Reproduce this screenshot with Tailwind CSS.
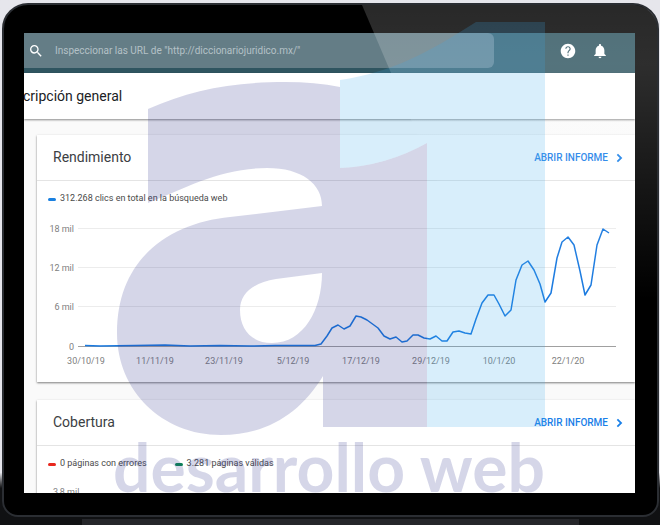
<!DOCTYPE html>
<html lang="es">
<head>
  <meta charset="UTF-8">
  <meta name="viewport" content="width=device-width, initial-scale=1.0">
  <title>Descripción general</title>
  <script src="https://cdn.jsdelivr.net/npm/@tailwindcss/browser@4"></script>
</head>
<body class="bg-[#e4e4ea] h-screen overflow-hidden font-['Roboto',sans-serif]">
  <div class="relative h-full flex flex-col pt-[3px] pl-0.5 pr-px bg-linear-to-b from-[#e6e6ec] from-90% to-[#101113] to-93%">

    <!-- Portátil -->
    <div class="flex-1 min-h-0 flex bg-black rounded-t-[26px] rounded-b-[16px] border-2 border-[#2b2e33] pt-7 pb-[22px] pl-5 pr-[22px]">

      <!-- Pantalla -->
      <div class="flex-1 min-w-0 flex flex-col overflow-hidden bg-[#fafafa]">
        <!-- Barra superior -->
        <header class="h-10 shrink-0 flex items-start bg-[#2f5560]">
          <label class="w-[470px] h-[35px] flex items-center rounded-r-md bg-[#647d86] pl-1">
            <svg class="w-4 h-4 shrink-0" viewBox="0 0 24 24" fill="#fff" aria-hidden="true">
              <path d="M15.5 14h-.79l-.28-.27A6.47 6.47 0 0 0 16 9.5 6.5 6.5 0 1 0 9.5 16c1.61 0 3.09-.59 4.23-1.57l.27.28v.79l5 4.99L20.49 19l-4.99-5zm-6 0C7.01 14 5 11.99 5 9.5S7.01 5 9.5 5 14 7.01 14 9.5 11.99 14 9.5 14z"/>
            </svg>
            <input type="text" aria-label="Inspeccionar URL" placeholder='Inspeccionar las URL de "http://diccionariojuridico.mx/"' class="flex-1 min-w-0 ml-[11px] text-[10px] text-white outline-none placeholder:text-[#b4c1c6]">
          </label>
          <div class="ml-auto h-[35px] flex items-center gap-4 pr-[27px]">
            <button aria-label="Ayuda">
              <svg class="w-4 h-4" viewBox="1 1 22 22" fill="#fff">
                <path d="M12 2C6.48 2 2 6.48 2 12s4.48 10 10 10 10-4.48 10-10S17.52 2 12 2zm.8 16.500h-1.600v-1.700h1.600v1.700zm2-7.250-.9.92C13.200 12.900 12.800 13.500 12.800 15h-1.600v-.5c0-1.100.4-2.100 1.100-2.830l1.240-1.260c.37-.36.59-.86.59-1.410 0-1.100-.95-2-2.130-2s-2.130.9-2.130 2H8.300c0-2.110 1.600-3.700 3.700-3.700s3.700 1.600 3.700 3.700c0 .88-.36 1.680-.9 2.250z"/>
              </svg>
            </button>
            <button aria-label="Notificaciones">
              <svg class="w-4 h-4" viewBox="1 1 22 22" fill="#fff">
                <path d="M12 22c1.1 0 2-.9 2-2h-4c0 1.1.89 2 2 2zm6-6v-5c0-3.07-1.64-5.64-4.5-6.32V4c0-.83-.67-1.5-1.5-1.5s-1.5.67-1.5 1.5v.68C7.63 5.36 6 7.92 6 11v5l-2 2v1h16v-1l-2-2z"/>
              </svg>
            </button>
          </div>
        </header>

        <!-- Título -->
        <div class="h-[46px] shrink-0 flex items-center overflow-hidden bg-white shadow-[0_1px_2px_rgba(0,0,0,0.45)]">
          <h1 class="-ml-px text-[14px] text-[#202124]">cripción general</h1>
        </div>

        <main class="flex-1 min-h-0 overflow-hidden pt-4 pl-[13px] space-y-[18px]">
          <!-- Rendimiento -->
          <section class="h-[247px] bg-white shadow-[0_1px_2px_rgba(0,0,0,0.5)]">
            <div class="h-[46px] flex items-center justify-between border-b border-[#e4e4e4] pl-4 pr-2">
              <h2 class="text-[14px] text-[#3c4043]">Rendimiento</h2>
              <a href="#" class="flex items-center gap-[3px] text-[10px] font-medium text-[#1a80e8]">ABRIR INFORME
                <svg class="w-4 h-4" viewBox="0 0 24 24" fill="currentColor"><path d="M8.600 16.600 13.200 12 8.600 7.400 10.500 5.500 17 12l-6.500 6.500z"/></svg>
              </a>
            </div>
            <p class="h-9 flex items-center gap-1 pl-[11px] text-[9px] text-[#4a4a4a]">
              <span class="w-2 h-[3px] rounded-full bg-[#1a80e0]"></span>312.268 clics en total en la búsqueda web
            </p>
            <svg class="block w-[598px] h-[160px]" viewBox="37 217 598 160" role="img" aria-label="Clics en total">
              <g stroke="#ececec">
                <path d="M78 228.500H616M78 267.500H616M78 306.500H616"/>
                <path d="M78 346.500H616" stroke="#a0a0a0"/>
              </g>
              <g font-size="9" fill="#808080" text-anchor="end">
                <text x="74" y="232">18 mil</text>
                <text x="74" y="271">12 mil</text>
                <text x="74" y="310">6 mil</text>
                <text x="74" y="350">0</text>
              </g>
              <g font-size="9" fill="#808080" text-anchor="middle">
                <text x="86" y="364">30/10/19</text>
                <text x="155" y="364">11/11/19</text>
                <text x="224" y="364">23/11/19</text>
                <text x="293" y="364">5/12/19</text>
                <text x="361" y="364">17/12/19</text>
                <text x="431" y="364">29/12/19</text>
                <text x="499" y="364">10/1/20</text>
                <text x="568" y="364">22/1/20</text>
              </g>
              <polyline fill="none" stroke="#1a7ae0" stroke-width="1.500" stroke-linejoin="round" points="85,345.500 100,346 135,345.500 165,345 190,346 220,345.500 250,346 275,345.500 315,345.500 321,344 327,336 332,328 338,325 344,329 350,326 356,316 361,317 367,320 378,328 384,336 390,339 396,337 402,342 407,341 413,335 418,335 424,338 430,339 436,336 442,341 447,341 453,332 459,331 465,333 471,334 476,319 482,303 488,295 494,295 499,304 505,316 511,310 516,280 522,265 528,261 534,270 540,284 545,302 551,293 557,258 562,242 568,237 574,245 580,271 585,295 591,285 597,245 603,229 609,233"/>
            </svg>
          </section>

          <!-- Cobertura -->
          <section class="h-[247px] bg-white shadow-[0_1px_2px_rgba(0,0,0,0.5)]">
            <div class="h-[46px] flex items-center justify-between border-b border-[#e4e4e4] pl-4 pr-2">
              <h2 class="text-[14px] text-[#3c4043]">Cobertura</h2>
              <a href="#" class="flex items-center gap-[3px] text-[10px] font-medium text-[#1a80e8]">ABRIR INFORME
                <svg class="w-4 h-4" viewBox="0 0 24 24" fill="currentColor"><path d="M8.600 16.600 13.200 12 8.600 7.400 10.500 5.500 17 12l-6.500 6.500z"/></svg>
              </a>
            </div>
            <div class="h-9 flex items-center gap-7 pl-[11px] text-[9px] text-[#4a4a4a]">
              <p class="flex items-center gap-1"><span class="w-2 h-[3px] rounded-full bg-[#e8281e]"></span>0 páginas con errores</p>
              <p class="flex items-center gap-1"><span class="w-2 h-[3px] rounded-full bg-[#0b8a52]"></span>3.281 páginas válidas</p>
            </div>
            <p class="pl-4 pt-1 text-[9px] text-[#808080]">3,8 mil</p>
          </section>
        </main>
      </div>
    </div>

    <!-- Base del portátil -->
    <div class="h-2 shrink-0 mx-20 bg-[#25262a] border-t-2 border-[#101113]"></div>

    <!-- Reflejo y marca de agua -->
    <svg class="absolute left-0 top-0 w-[660px] h-[525px] pointer-events-none" viewBox="0 0 660 525" aria-hidden="true">
      <defs>
        <linearGradient id="reflejo" x1="0" y1="0" x2="0" y2="1">
          <stop offset="0" stop-color="#fff" stop-opacity=".16"/>
          <stop offset=".2" stop-color="#fff" stop-opacity=".18"/>
          <stop offset="1" stop-color="#fff" stop-opacity="0"/>
        </linearGradient>
      </defs>
      <path fill="url(#reflejo)" d="M362 5H634Q657 8 657 30V300H488z"/>
      <path fill="#2d328c" fill-opacity=".2" fill-rule="evenodd" d="M148 109C190 90 232 82 285 82Q315 82 340 87V168Q386 166 427 143V427H323V376C300 414 266 435 221 435C162 435 117 391 117 333C117 258 170 223 230 217L322 206C322 184 302 168 267 168C222 168 187 187 148 203zM322 273L276 279C252 283 240 294 240 310C240 330 252 343 272 343C304 343 322 309 322 273z"/>
      <path fill="#3caaeb" fill-opacity=".2" d="M476 22H545V427H427V143Q386 166 340 168V80C392 72 426 54 476 22z"/>
      <text x="113" y="492" font-family="Lato, sans-serif" font-weight="700" font-size="66" fill="#2d328c" fill-opacity=".2">desarrollo web</text>
    </svg>
  </div>
</body>
</html>
